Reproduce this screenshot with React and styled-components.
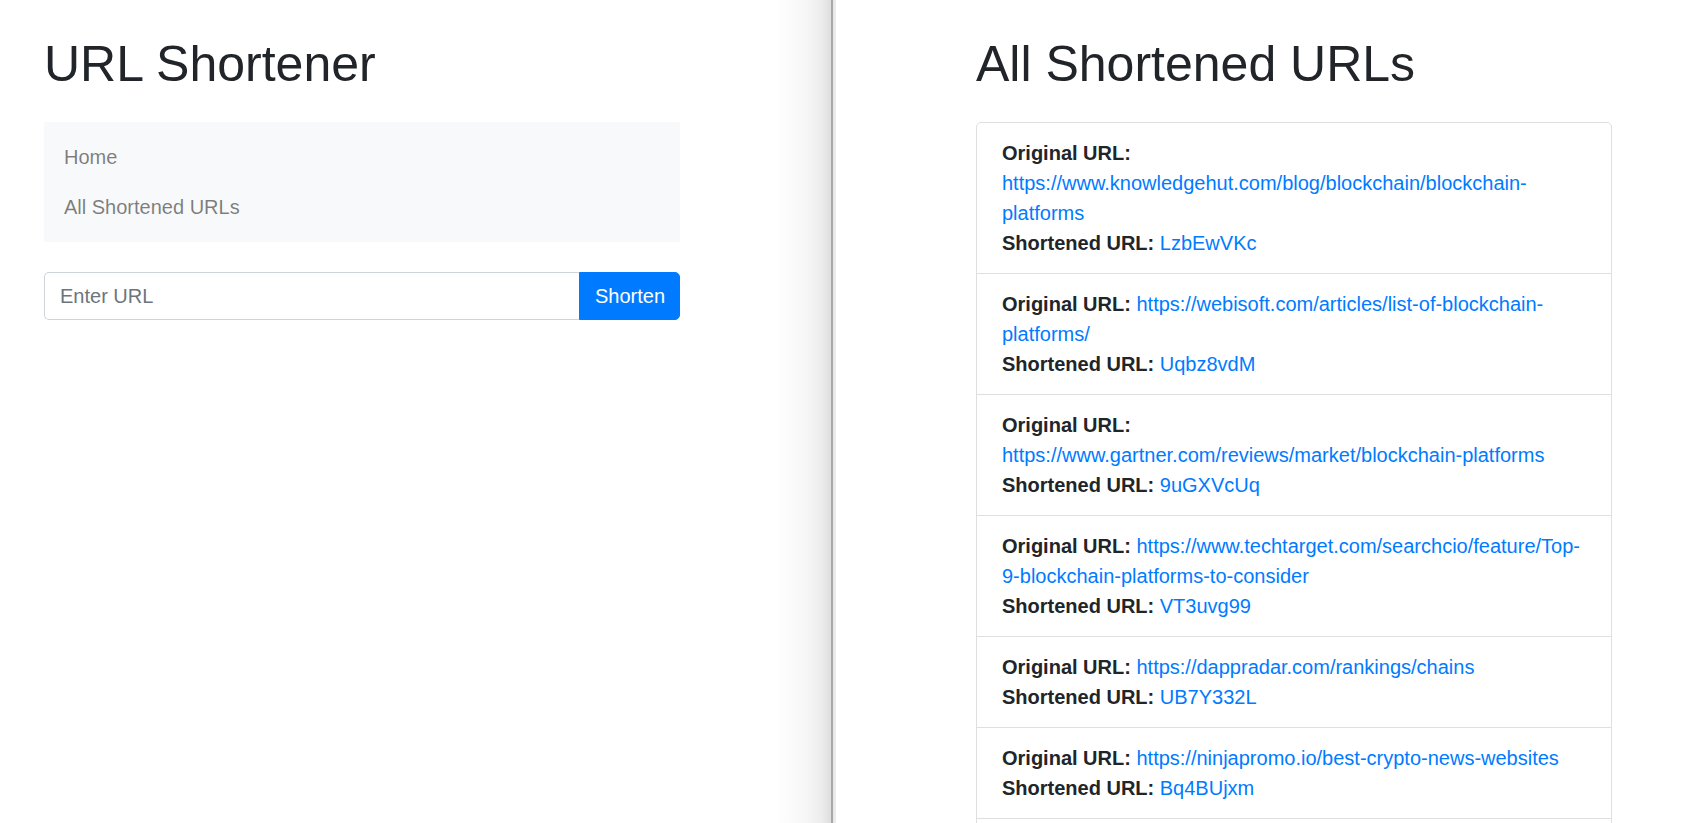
import React from 'react';
import styled, { createGlobalStyle } from 'styled-components';

const textColor = '#212529';
const linkColor = '#007bff';

const GlobalStyle = createGlobalStyle`
  html, body {
    margin: 0;
    padding: 0;
    height: 100%;
    overflow: hidden;
  }
  body {
    font-family: "Liberation Sans", Arial, sans-serif;
    font-size: 20px;
    line-height: 1.5;
    color: ${textColor};
    background: #fff;
  }
  * {
    box-sizing: border-box;
  }
`;

const Screen = styled.div`
  display: flex;
  height: 100vh;
  overflow: hidden;
`;

const LeftWindow = styled.div`
  flex: none;
  width: 831px;
  padding: 34px 0 0 44px;
  /* window edge shadow */
  background: linear-gradient(
    to right,
    #fff 0,
    #fff 776px,
    #f7f7f7 805px,
    #ececec 822px,
    #dedede 831px
  );
`;

const Divider = styled.div`
  flex: none;
  width: 5px;
  background: linear-gradient(
    to right,
    #a8a8a8 0,
    #a8a8a8 2px,
    #e6e6e6 2px,
    #eeeeee 5px
  );
`;

const RightWindow = styled.div`
  flex: 1;
  padding: 34px 0 0 140px;
  background: #fff;
`;

const Column = styled.div`
  width: 636px;
`;

const Title = styled.h1`
  margin: 0 0 28px;
  font-size: 50px;
  font-weight: 500;
  line-height: 1.2;
  color: ${textColor};
`;

const NavBar = styled.nav`
  display: flex;
  flex-direction: column;
  padding: 10px 20px;
  background: #f8f9fa;
`;

const NavLink = styled.a`
  padding: 10px 0;
  line-height: 30px;
  color: rgba(0, 0, 0, 0.5);
  text-decoration: none;
`;

const ShortenForm = styled.form`
  display: flex;
  margin-top: 30px;
  height: 48px;
`;

const UrlInput = styled.input`
  flex: 1;
  min-width: 0;
  height: 100%;
  padding: 7px 15px;
  font: inherit;
  font-size: 20px;
  color: #495057;
  border: 1px solid #ced4da;
  border-right: 0;
  border-radius: 5px 0 0 5px;
  outline: none;

  &::placeholder {
    color: #6c757d;
  }
`;

const ShortenButton = styled.button`
  flex: none;
  width: 101px;
  height: 100%;
  padding: 7px 15px;
  font: inherit;
  font-size: 20px;
  color: #fff;
  background: ${linkColor};
  border: 1px solid ${linkColor};
  border-radius: 0 5px 5px 0;
  cursor: pointer;
`;

const ListGroup = styled.ul`
  margin: 0;
  padding: 0;
  list-style: none;
  border: 1px solid rgba(0, 0, 0, 0.125);
  border-radius: 5px;
  overflow: hidden;
`;

const ListItem = styled.li`
  padding: 15px 25px;
  line-height: 30px;
  border-top: 1px solid rgba(0, 0, 0, 0.125);

  &:first-child {
    border-top: 0;
  }
`;

const Label = styled.strong`
  font-weight: 700;
`;

const UrlLink = styled.a`
  color: ${linkColor};
  text-decoration: none;
`;

const urls = [
  { original: 'https://www.knowledgehut.com/blog/blockchain/blockchain-platforms', short: 'LzbEwVKc' },
  { original: 'https://webisoft.com/articles/list-of-blockchain-platforms/', short: 'Uqbz8vdM' },
  { original: 'https://www.gartner.com/reviews/market/blockchain-platforms', short: '9uGXVcUq' },
  { original: 'https://www.techtarget.com/searchcio/feature/Top-9-blockchain-platforms-to-consider', short: 'VT3uvg99' },
  { original: 'https://dappradar.com/rankings/chains', short: 'UB7Y332L' },
  { original: 'https://ninjapromo.io/best-crypto-news-websites', short: 'Bq4BUjxm' },
  { original: 'https://coinmarketcap.com/view/platform/', short: 'Kd82hQzP' },
];

const App = () => {
  return (
    <>
      <GlobalStyle />
      <Screen>
        <LeftWindow>
          <Column>
            <Title>URL Shortener</Title>
            <NavBar>
              <NavLink href="#">Home</NavLink>
              <NavLink href="#">All Shortened URLs</NavLink>
            </NavBar>
            <ShortenForm onSubmit={(e) => e.preventDefault()}>
              <UrlInput type="text" placeholder="Enter URL" />
              <ShortenButton type="submit">Shorten</ShortenButton>
            </ShortenForm>
          </Column>
        </LeftWindow>
        <Divider />
        <RightWindow>
          <Column>
            <Title>All Shortened URLs</Title>
            <ListGroup>
              {urls.map((u) => (
                <ListItem key={u.short}>
                  <Label>Original URL:</Label>{' '}
                  <UrlLink href={u.original}>{u.original}</UrlLink>
                  <br />
                  <Label>Shortened URL:</Label>{' '}
                  <UrlLink href="#">{u.short}</UrlLink>
                </ListItem>
              ))}
            </ListGroup>
          </Column>
        </RightWindow>
      </Screen>
    </>
  );
};

export default App;
